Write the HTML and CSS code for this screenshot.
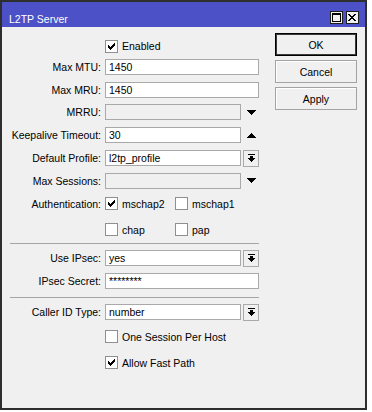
FILE: index.html
```html
<!DOCTYPE html>
<html>
<head>
<meta charset="utf-8">
<link rel="stylesheet" href="styles.css">
</head>
<body>
<div class="window">
  <div class="titlebar">
    <span class="title">L2TP Server</span>
    <div class="tb-buttons">
      <span class="tb-btn"><svg width="11" height="11" viewBox="0 0 11 11" shape-rendering="crispEdges"><path d="M1 1h9v2H1z M1 3h1v6H1z M9 3h1v6H9z M1 9h9v1H1z" fill="#000"/></svg></span>
      <span class="tb-btn"><svg width="11" height="11" viewBox="0 0 11 11" shape-rendering="crispEdges"><path d="M1 2h2v1H1z M7 2h2v1H7z M2 3h2v1H2z M6 3h2v1H6z M3 4h4v1H3z M4 5h2v1H4z M3 6h4v1H3z M2 7h2v1H2z M6 7h2v1H6z M1 8h2v1H1z M7 8h2v1H7z" fill="#000"/></svg></span>
    </div>
  </div>
  <div class="body">
    <div class="form">
      <div class="row cb-row first">
        <span class="label"></span>
        <span class="check"><span class="box"><svg class="tick" width="11" height="11" viewBox="0 0 11 11" shape-rendering="crispEdges"><path d="M8 2h1v1H8z M7 3h2v1H7z M2 4h1v1H2z M6 4h3v1H6z M2 5h2v1H2z M5 5h3v1H5z M2 6h5v1H2z M3 7h3v1H3z M4 8h1v1H4z" fill="#000"/></svg></span>Enabled</span>
      </div>
      <div class="row">
        <span class="label">Max MTU:</span>
        <span class="input">1450</span>
      </div>
      <div class="row">
        <span class="label">Max MRU:</span>
        <span class="input">1450</span>
      </div>
      <div class="row">
        <span class="label">MRRU:</span>
        <span class="combo"><span class="input disabled"></span><span class="arrow"><svg width="9" height="5" viewBox="0 0 9 5" shape-rendering="crispEdges"><path d="M0 0h9v1H0z M1 1h7v1H1z M2 2h5v1H2z M3 3h3v1H3z M4 4h1v1H4z" fill="#000"/></svg></span></span>
      </div>
      <div class="row">
        <span class="label">Keepalive Timeout:</span>
        <span class="combo"><span class="input">30</span><span class="arrow"><svg width="9" height="5" viewBox="0 0 9 5" shape-rendering="crispEdges"><path d="M4 0h1v1H4z M3 1h3v1H3z M2 2h5v1H2z M1 3h7v1H1z M0 4h9v1H0z" fill="#000"/></svg></span></span>
      </div>
      <div class="row">
        <span class="label">Default Profile:</span>
        <span class="combo"><span class="input">l2tp_profile</span><span class="drop-btn"><svg width="7" height="8" viewBox="0 0 7 8" shape-rendering="crispEdges"><path d="M0 0h7v1H0z M2 2h3v2H2z M0 4h7v1H0z M1 5h5v1H1z M2 6h3v1H2z M3 7h1v1H3z" fill="#000"/></svg></span></span>
      </div>
      <div class="row">
        <span class="label">Max Sessions:</span>
        <span class="combo"><span class="input disabled"></span><span class="arrow"><svg width="9" height="5" viewBox="0 0 9 5" shape-rendering="crispEdges"><path d="M0 0h9v1H0z M1 1h7v1H1z M2 2h5v1H2z M3 3h3v1H3z M4 4h1v1H4z" fill="#000"/></svg></span></span>
      </div>
      <div class="row cb-row gap-auth">
        <span class="label">Authentication:</span>
        <span class="checks">
          <span class="check"><span class="box"><svg class="tick" width="11" height="11" viewBox="0 0 11 11" shape-rendering="crispEdges"><path d="M8 2h1v1H8z M7 3h2v1H7z M2 4h1v1H2z M6 4h3v1H6z M2 5h2v1H2z M5 5h3v1H5z M2 6h5v1H2z M3 7h3v1H3z M4 8h1v1H4z" fill="#000"/></svg></span>mschap2</span>
          <span class="check"><span class="box"></span>mschap1</span>
        </span>
      </div>
      <div class="row cb-row gap-cb">
        <span class="label"></span>
        <span class="checks">
          <span class="check"><span class="box"></span>chap</span>
          <span class="check"><span class="box"></span>pap</span>
        </span>
      </div>
      <div class="sep sep-a"></div>
      <div class="row after-sep">
        <span class="label">Use IPsec:</span>
        <span class="combo"><span class="input">yes</span><span class="drop-btn"><svg width="7" height="8" viewBox="0 0 7 8" shape-rendering="crispEdges"><path d="M0 0h7v1H0z M2 2h3v2H2z M0 4h7v1H0z M1 5h5v1H1z M2 6h3v1H2z M3 7h1v1H3z" fill="#000"/></svg></span></span>
      </div>
      <div class="row gap-7">
        <span class="label">IPsec Secret:</span>
        <span class="input">********</span>
      </div>
      <div class="sep sep-b"></div>
      <div class="row after-sep">
        <span class="label">Caller ID Type:</span>
        <span class="combo"><span class="input">number</span><span class="drop-btn"><svg width="7" height="8" viewBox="0 0 7 8" shape-rendering="crispEdges"><path d="M0 0h7v1H0z M2 2h3v2H2z M0 4h7v1H0z M1 5h5v1H1z M2 6h3v1H2z M3 7h1v1H3z" fill="#000"/></svg></span></span>
      </div>
      <div class="row cb-row gap-10">
        <span class="label"></span>
        <span class="check"><span class="box"></span>One Session Per Host</span>
      </div>
      <div class="row cb-row gap-cb">
        <span class="label"></span>
        <span class="check"><span class="box"><svg class="tick" width="11" height="11" viewBox="0 0 11 11" shape-rendering="crispEdges"><path d="M8 2h1v1H8z M7 3h2v1H7z M2 4h1v1H2z M6 4h3v1H6z M2 5h2v1H2z M5 5h3v1H5z M2 6h5v1H2z M3 7h3v1H3z M4 8h1v1H4z" fill="#000"/></svg></span>Allow Fast Path</span>
      </div>
    </div>
    <div class="buttons">
      <button class="btn default">OK</button>
      <button class="btn">Cancel</button>
      <button class="btn">Apply</button>
    </div>
  </div>
</div>
</body>
</html>
```
FILE: styles.css
```css
* { box-sizing: border-box; }

body {
  margin: 0;
  background: #ffffff;
  font-family: "Liberation Sans", Arial, sans-serif;
  font-size: 10.5px;
  color: #000;
}

.window {
  width: 367px;
  height: 410px;
  border: 2px solid #2e2e2e;
  background: #f0f0f0;
  display: flex;
  flex-direction: column;
}

.titlebar {
  height: 25px;
  flex: none;
  background: #4c51c8;
  color: #fff;
  display: flex;
  justify-content: space-between;
  align-items: flex-start;
  padding: 9px 6px 0 7px;
}

.title {
  line-height: 12px;
  margin-top: 2px;
}

.tb-buttons {
  display: flex;
  gap: 3px;
}

.tb-btn {
  width: 13px;
  height: 13px;
  background: #f0f0f0;
  border: 1px solid #1e1e1e;
  display: flex;
}

.body {
  flex: 1;
  display: flex;
}

.form {
  width: 273px;
  padding-top: 12px;
  display: flex;
  flex-direction: column;
}

.row {
  display: grid;
  grid-template-columns: 99px 154px;
  column-gap: 4px;
  align-items: center;
  height: 16px;
  margin-top: 6.8px;
  line-height: 14px;
}

.row.first { margin-top: 0; }
.cb-row { height: 13px; }
.gap-auth { margin-top: 8px; }
.gap-cb { margin-top: 13px; }
.gap-7 { margin-top: 7px; }
.gap-10 { margin-top: 10px; }
.after-sep { margin-top: 6px; }

.label {
  text-align: right;
  white-space: nowrap;
}

.input {
  display: block;
  height: 16px;
  border: 1px solid #a9a9a9;
  background: #fff;
  padding-left: 3px;
  line-height: 14px;
  white-space: nowrap;
  overflow: hidden;
}

.input.disabled { background: #f0f0f0; }

.combo {
  display: grid;
  grid-template-columns: 136px 16px;
  column-gap: 2px;
  align-items: center;
}

.arrow {
  display: flex;
  justify-content: center;
  align-items: center;
  height: 16px;
}

.drop-btn {
  height: 17px;
  border: 1px solid #a9a9a9;
  background: #f0f0f0;
  display: flex;
  justify-content: center;
  align-items: center;
}

.check {
  display: flex;
  align-items: center;
  gap: 4px;
  white-space: nowrap;
}

.checks {
  display: grid;
  grid-template-columns: 70px auto;
}

.box {
  width: 13px;
  height: 13px;
  flex: none;
  border: 1px solid #8f8f8f;
  background: #fff;
  display: flex;
}

.sep {
  height: 1px;
  background: #a5a5a5;
  margin-left: 8px;
  width: 249px;
  flex: none;
}

.sep-a { margin-top: 7px; }
.sep-b { margin-top: 8px; }

.buttons {
  padding-top: 6px;
  display: flex;
  flex-direction: column;
  gap: 4px;
}

.btn {
  width: 82px;
  height: 23px;
  border: 1px solid #a3a3a3;
  background: #f0f0f0;
  box-shadow: inset 1px 1px 0 #fff;
  font-family: inherit;
  font-size: 10.5px;
  color: #000;
  padding: 0;
}

.btn.default {
  border: 1px solid #000;
  box-shadow: inset 0 0 0 1px #3a3a3a;
}
```
